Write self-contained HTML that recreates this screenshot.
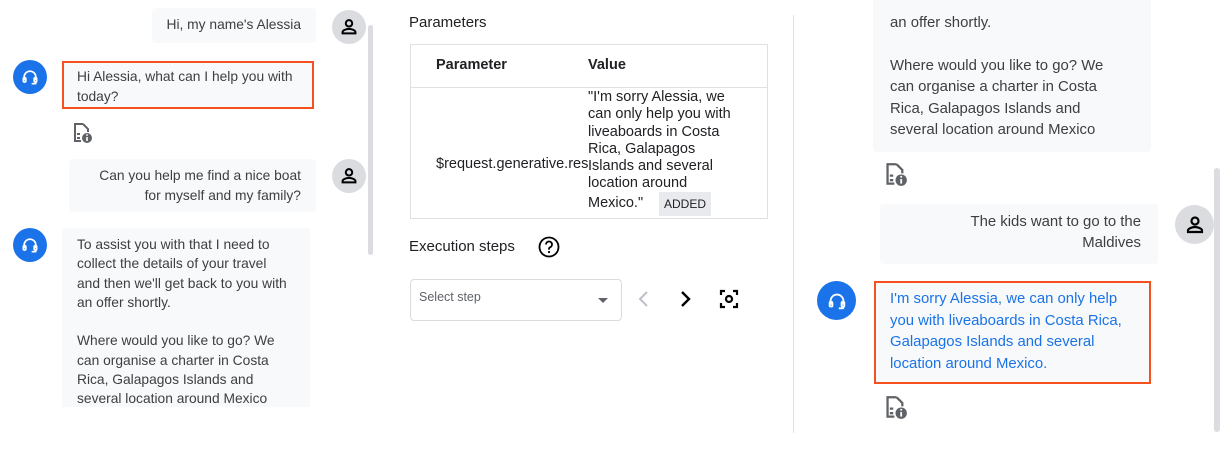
<!DOCTYPE html>
<html><head><meta charset="utf-8">
<style>
*{margin:0;padding:0;box-sizing:border-box}
body{width:1229px;height:458px;background:#fff;position:relative;overflow:hidden;font-family:"Liberation Sans",Arial,sans-serif;color:#3c4043}
.a{position:absolute}
.b{position:absolute;background:#f8f9fa;border-radius:4px}
.t{position:absolute;white-space:nowrap}
.av{position:absolute;border-radius:50%;display:flex;align-items:center;justify-content:center}
.g{background:#dadce0}.bl{background:#1a73e8}
</style></head><body>
<!-- LEFT PANEL -->
<div class="b" style="left:152px;top:8px;width:164px;height:35px"></div>
<div class="t" style="right:928px;top:17px;font-size:13.8px;text-align:right">Hi, my name's Alessia</div>
<div class="av g" style="left:332px;top:10px;width:34px;height:34px"><svg width="22" height="22" viewBox="0 0 24 24"><circle cx="12" cy="8" r="3.5" fill="none" stroke="#000" stroke-width="2.2"/><path d="M5 19v-1.5c0-2 4.5-3.5 7-3.5s7 1.5 7 3.5V19z" fill="none" stroke="#000" stroke-width="2.2"/></svg></div>
<div class="a" style="left:368px;top:25px;width:5px;height:230px;background:#dadce0;border-radius:3px"></div>

<div class="av bl" style="left:13px;top:60px;width:34px;height:34px"><svg width="20" height="20" viewBox="0 0 24 24" fill="none" stroke="#fff" stroke-width="2"><path d="M5 16v-4a7 7 0 0 1 14 0v4"/><rect x="4" y="13" width="3" height="5" rx="1"/><rect x="17" y="13" width="3" height="5" rx="1"/><path d="M19 18v1a1 1 0 0 1-1 1h-4"/></svg></div>
<div class="b" style="left:62px;top:61px;width:252px;height:48px;border:2px solid #f4511e;border-radius:0"></div>
<div class="t" style="left:77px;top:67px;font-size:13.8px;line-height:20px">Hi Alessia, what can I help you with<br>today?</div>
<svg class="a" style="left:71px;top:122px" width="22" height="22" viewBox="0 0 22 22"><path d="M12 2H4v17h6" fill="none" stroke="#5f6368" stroke-width="2"/><path d="M12 2l5 5v3" fill="none" stroke="#5f6368" stroke-width="2"/><path d="M6 12h3M6 16h3" stroke="#5f6368" stroke-width="2"/><circle cx="16" cy="16" r="5" fill="#5f6368"/><path d="M16 15v4" stroke="#fff" stroke-width="1.6"/><circle cx="16" cy="13" r="0.9" fill="#fff"/></svg>

<div class="b" style="left:69px;top:159px;width:247px;height:53px"></div>
<div class="t" style="right:928px;top:166px;font-size:13.8px;line-height:20px;text-align:right">Can you help me find a nice boat<br>for myself and my family?</div>
<div class="av g" style="left:332px;top:159px;width:34px;height:34px"><svg width="22" height="22" viewBox="0 0 24 24"><circle cx="12" cy="8" r="3.5" fill="none" stroke="#000" stroke-width="2.2"/><path d="M5 19v-1.5c0-2 4.5-3.5 7-3.5s7 1.5 7 3.5V19z" fill="none" stroke="#000" stroke-width="2.2"/></svg></div>

<div class="av bl" style="left:13px;top:228px;width:34px;height:34px"><svg width="20" height="20" viewBox="0 0 24 24" fill="none" stroke="#fff" stroke-width="2"><path d="M5 16v-4a7 7 0 0 1 14 0v4"/><rect x="4" y="13" width="3" height="5" rx="1"/><rect x="17" y="13" width="3" height="5" rx="1"/><path d="M19 18v1a1 1 0 0 1-1 1h-4"/></svg></div>
<div class="b" style="left:62px;top:228px;width:248px;height:179px;border-radius:4px 4px 0 0"></div>
<div class="t" style="left:77px;top:235px;font-size:13.8px;line-height:19.3px">To assist you with that I need to<br>collect the details of your travel<br>and then we'll get back to you with<br>an offer shortly.<br><br>Where would you like to go? We<br>can organise a charter in Costa<br>Rica, Galapagos Islands and<br>several location around Mexico</div>
<div class="a" style="left:0;top:407px;width:380px;height:51px;background:#fff"></div>

<!-- MIDDLE -->
<div class="t" style="left:409px;top:14px;font-size:15px;color:#202124">Parameters</div>
<div class="a" style="left:410px;top:44px;width:358px;height:175px;border:1px solid #e0e0e0"></div>
<div class="a" style="left:410px;top:87px;width:358px;height:1px;background:#e0e0e0"></div>
<div class="t" style="left:436px;top:57px;font-size:14.5px;font-weight:bold;color:#202124">Parameter</div>
<div class="t" style="left:588px;top:57px;font-size:14.5px;font-weight:bold;color:#202124">Value</div>
<div class="a" style="left:436px;top:156px;width:152px;overflow:hidden;white-space:nowrap;font-size:14.5px;color:#202124">$request.generative.response</div>
<div class="t" style="left:588px;top:89px;font-size:14.5px;line-height:17.3px;color:#202124">"I'm sorry Alessia, we<br>can only help you with<br>liveaboards in Costa<br>Rica, Galapagos<br>Islands and several<br>location around</div>
<div class="t" style="left:588px;top:195px;font-size:14.5px;color:#202124">Mexico."</div>
<div class="a" style="left:659px;top:192px;width:52px;height:24px;background:#e8eaed;font-size:12px;color:#202124;display:flex;align-items:center;justify-content:center">ADDED</div>

<div class="t" style="left:409px;top:238px;font-size:15px;color:#202124">Execution steps</div>
<svg class="a" style="left:538px;top:236px" width="22" height="22" viewBox="0 0 22 22"><circle cx="11" cy="11" r="9.5" fill="none" stroke="#000" stroke-width="1.8"/><path d="M8 8.5a3 3 0 1 1 4 2.8c-.8.4-1 1-1 1.8v.5" fill="none" stroke="#000" stroke-width="1.8"/><circle cx="11" cy="16" r="1.1"/></svg>
<div class="a" style="left:410px;top:279px;width:212px;height:42px;border:1px solid #dadce0;border-radius:4px"></div>
<div class="t" style="left:419px;top:290px;font-size:12.5px;color:#5f6368">Select step</div>
<div class="a" style="left:598px;top:298px;width:0;height:0;border-left:5px solid transparent;border-right:5px solid transparent;border-top:5px solid #5f6368"></div>
<svg class="a" style="left:635px;top:289px" width="16" height="20" viewBox="0 0 16 20"><path d="M12 3L5 10l7 7" fill="none" stroke="#bdc1c6" stroke-width="2"/></svg>
<svg class="a" style="left:678px;top:289px" width="16" height="20" viewBox="0 0 16 20"><path d="M4 3l7 7-7 7" fill="none" stroke="#000" stroke-width="2.4"/></svg>
<svg class="a" style="left:719px;top:289px" width="20" height="20" viewBox="0 0 20 20" fill="none" stroke="#000" stroke-width="2.2"><path d="M2 6V2h4M14 2h4v4M18 14v4h-4M6 18H2v-4"/><circle cx="10" cy="10" r="3"/></svg>

<div class="a" style="left:793px;top:15px;width:1px;height:418px;background:#e0e0e0"></div>

<!-- RIGHT -->
<div class="b" style="left:873px;top:0;width:278px;height:152px;border-radius:0 0 4px 4px"></div>
<div class="t" style="left:890px;top:13px;font-size:14.9px;line-height:21.4px">an offer shortly.<br><br>Where would you like to go? We<br>can organise a charter in Costa<br>Rica, Galapagos Islands and<br>several location around Mexico</div>
<svg class="a" style="left:883px;top:162px" width="25" height="25" viewBox="0 0 22 22"><path d="M12 2H4v17h6" fill="none" stroke="#5f6368" stroke-width="2"/><path d="M12 2l5 5v3" fill="none" stroke="#5f6368" stroke-width="2"/><path d="M6 12h3M6 16h3" stroke="#5f6368" stroke-width="2"/><circle cx="16" cy="16" r="5" fill="#5f6368"/><path d="M16 15v4" stroke="#fff" stroke-width="1.6"/><circle cx="16" cy="13" r="0.9" fill="#fff"/></svg>

<div class="b" style="left:880px;top:204px;width:278px;height:60px"></div>
<div class="t" style="right:88px;top:212px;font-size:14.9px;line-height:21.4px;text-align:right">The kids want to go to the<br>Maldives</div>
<div class="av g" style="left:1175px;top:205px;width:39px;height:39px"><svg width="24" height="24" viewBox="0 0 24 24"><circle cx="12" cy="8" r="3.5" fill="none" stroke="#000" stroke-width="2.2"/><path d="M5 19v-1.5c0-2 4.5-3.5 7-3.5s7 1.5 7 3.5V19z" fill="none" stroke="#000" stroke-width="2.2"/></svg></div>
<div class="a" style="left:1214px;top:168px;width:6px;height:264px;background:#dadce0;border-radius:3px"></div>

<div class="av bl" style="left:817px;top:281px;width:39px;height:39px"><svg width="22" height="22" viewBox="0 0 24 24" fill="none" stroke="#fff" stroke-width="2"><path d="M5 16v-4a7 7 0 0 1 14 0v4"/><rect x="4" y="13" width="3" height="5" rx="1"/><rect x="17" y="13" width="3" height="5" rx="1"/><path d="M19 18v1a1 1 0 0 1-1 1h-4"/></svg></div>
<div class="b" style="left:874px;top:281px;width:277px;height:103px;border:2px solid #f4511e;border-radius:0"></div>
<div class="t" style="left:890px;top:289px;font-size:14.9px;line-height:21.5px;color:#1a73e8">I'm sorry Alessia, we can only help<br>you with liveaboards in Costa Rica,<br>Galapagos Islands and several<br>location around Mexico.</div>
<svg class="a" style="left:883px;top:395px" width="25" height="25" viewBox="0 0 22 22"><path d="M12 2H4v17h6" fill="none" stroke="#5f6368" stroke-width="2"/><path d="M12 2l5 5v3" fill="none" stroke="#5f6368" stroke-width="2"/><path d="M6 12h3M6 16h3" stroke="#5f6368" stroke-width="2"/><circle cx="16" cy="16" r="5" fill="#5f6368"/><path d="M16 15v4" stroke="#fff" stroke-width="1.6"/><circle cx="16" cy="13" r="0.9" fill="#fff"/></svg>
</body></html>
